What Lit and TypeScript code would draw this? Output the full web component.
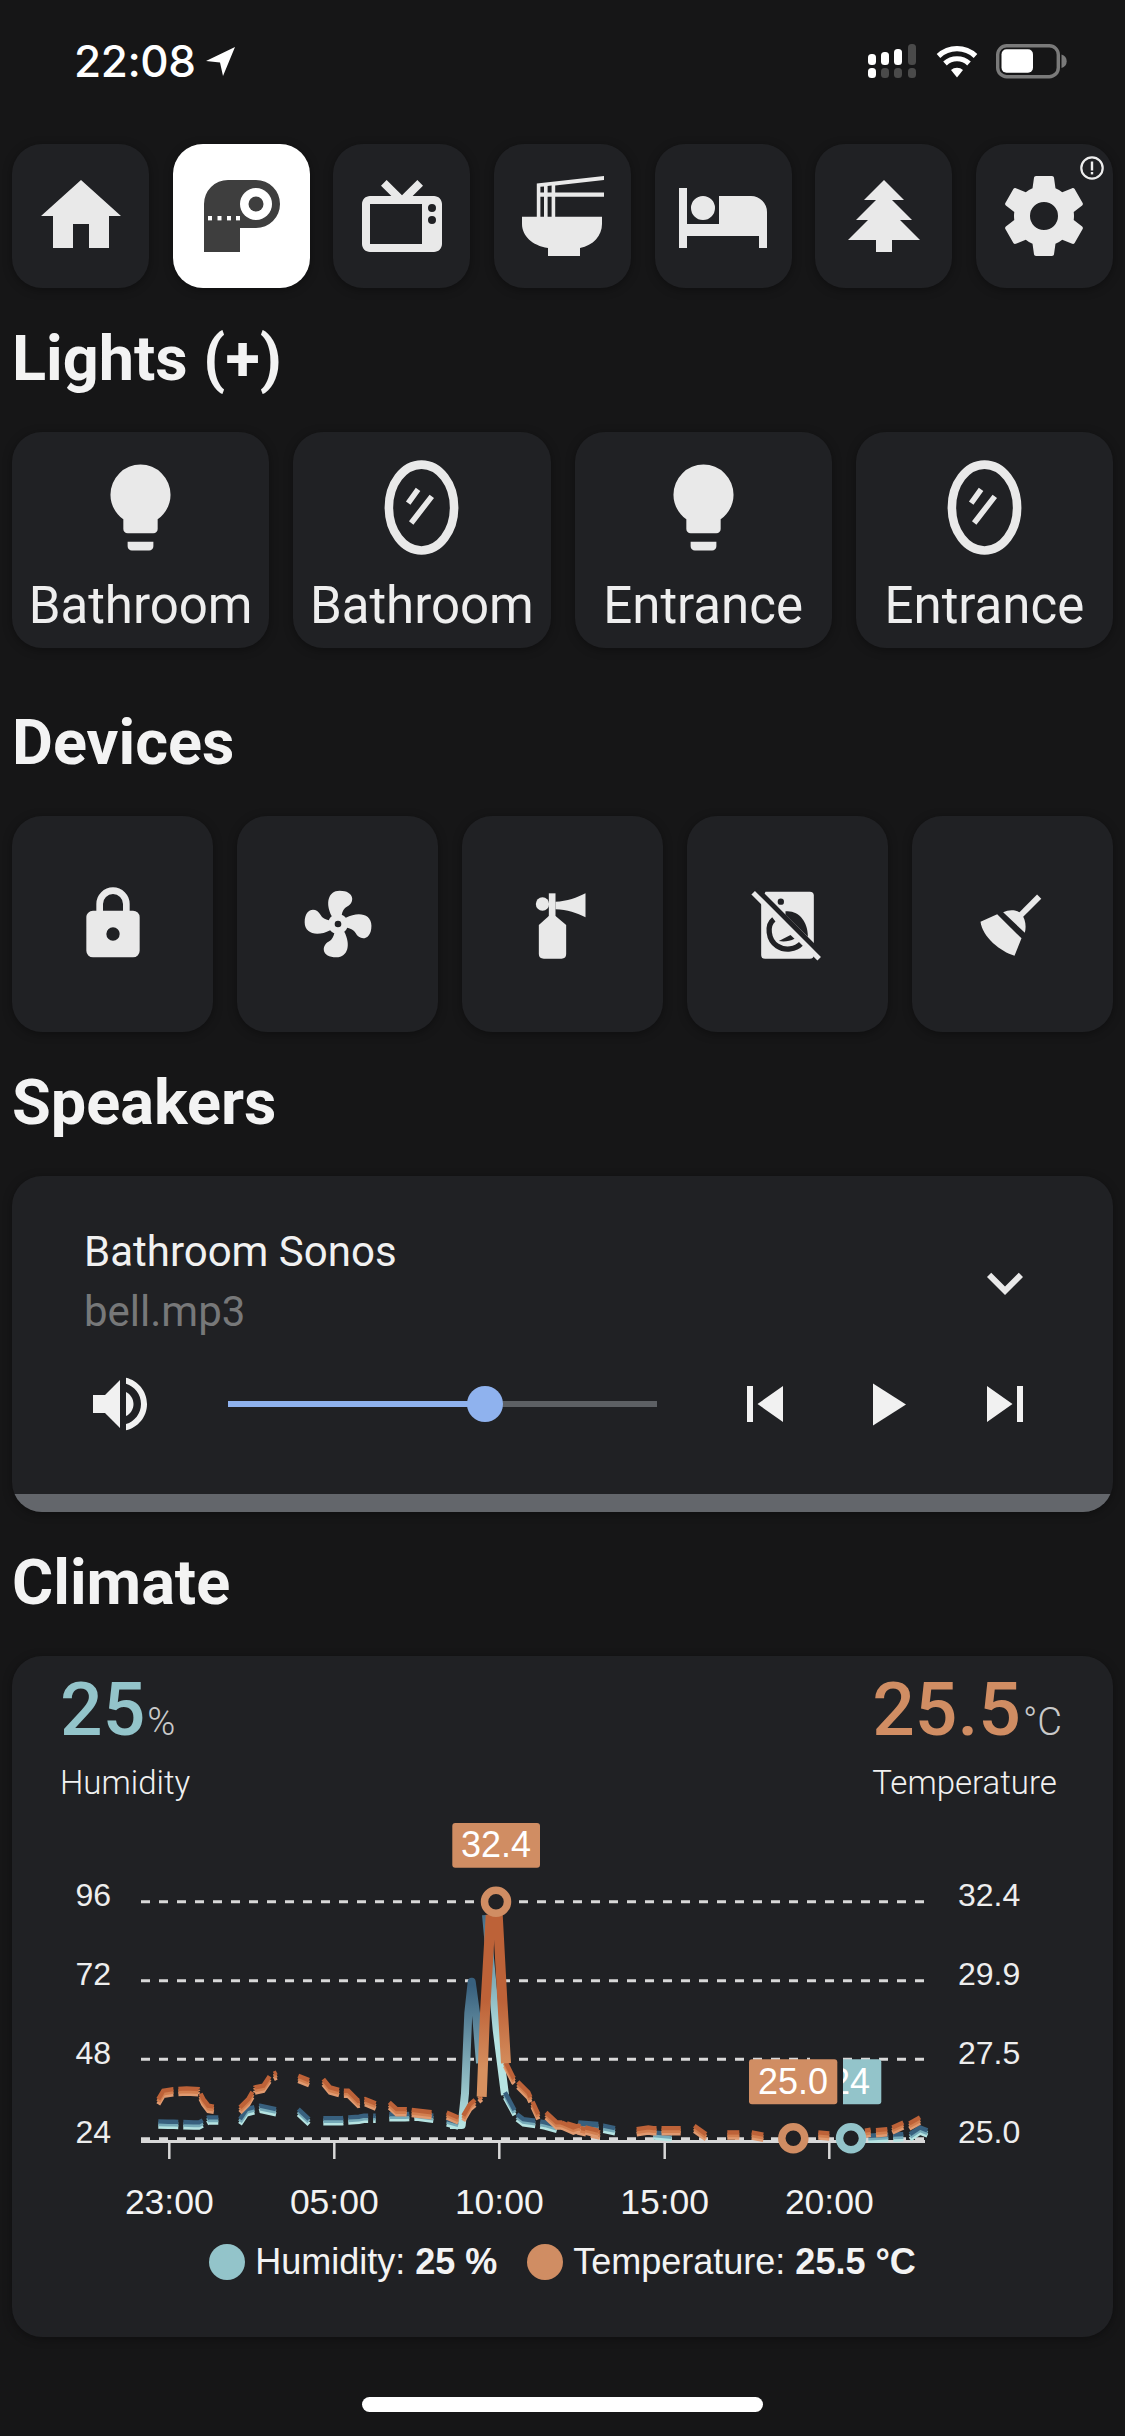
import { LitElement, html, css, svg } from "lit";
import { customElement } from "lit/decorators.js";

const P: Record<string, string> = {
  home: "M10,20V14H14V20H19V12H22L12,3L2,12H5V20H10Z",
  tv: "M8.16,3L6.75,4.41L9.34,7H4C2.89,7 2,7.89 2,9V19C2,20.11 2.89,21 4,21H20C21.11,21 22,20.11 22,19V9C22,7.89 21.11,7 20,7H14.66L17.25,4.41L15.84,3L12,6.84L8.16,3M4,9H17V19H4V9M19.5,9A1,1 0 0,1 20.5,10A1,1 0 0,1 19.5,11A1,1 0 0,1 18.5,10A1,1 0 0,1 19.5,9M19.5,12A1,1 0 0,1 20.5,13A1,1 0 0,1 19.5,14A1,1 0 0,1 18.5,13A1,1 0 0,1 19.5,12Z",
  bed: "M19,7H11V14H3V5H1V20H3V17H21V20H23V11A4,4 0 0,0 19,7M7,13A3,3 0 0,0 10,10A3,3 0 0,0 7,7A3,3 0 0,0 4,10A3,3 0 0,0 7,13Z",
  tree: "M10,21V18H3L8,13H5L10,8H7L12,3L17,8H14L19,13H16L21,18H14V21H10Z",
  cog: "M12,15.5A3.5,3.5 0 0,1 8.5,12A3.5,3.5 0 0,1 12,8.5A3.5,3.5 0 0,1 15.5,12A3.5,3.5 0 0,1 12,15.5M19.43,12.97C19.47,12.65 19.5,12.33 19.5,12C19.5,11.67 19.47,11.34 19.43,11L21.54,9.37C21.73,9.22 21.78,8.95 21.66,8.73L19.66,5.27C19.54,5.05 19.27,4.96 19.05,5.05L16.56,6.05C16.04,5.66 15.5,5.32 14.87,5.07L14.5,2.42C14.46,2.18 14.25,2 14,2H10C9.75,2 9.54,2.18 9.5,2.42L9.13,5.07C8.5,5.32 7.96,5.66 7.44,6.05L4.95,5.05C4.73,4.96 4.46,5.05 4.34,5.27L2.34,8.73C2.21,8.95 2.27,9.22 2.46,9.37L4.57,11C4.53,11.34 4.5,11.67 4.5,12C4.5,12.33 4.53,12.65 4.57,12.97L2.46,14.63C2.27,14.78 2.21,15.05 2.34,15.27L4.34,18.73C4.46,18.95 4.73,19.03 4.95,18.95L7.44,17.94C7.96,18.34 8.5,18.68 9.13,18.93L9.5,21.58C9.54,21.82 9.75,22 10,22H14C14.25,22 14.46,21.82 14.5,21.58L14.87,18.93C15.5,18.67 16.04,18.34 16.56,17.94L19.05,18.95C19.27,19.03 19.54,18.95 19.66,18.73L21.66,15.27C21.78,15.05 21.73,14.78 21.54,14.63L19.43,12.97Z",
  bulb: "M12,2A7,7 0 0,0 5,9C5,11.38 6.19,13.47 8,14.74V17A1,1 0 0,0 9,18H15A1,1 0 0,0 16,17V14.74C17.81,13.47 19,11.38 19,9A7,7 0 0,0 12,2M9,21A1,1 0 0,0 10,22H14A1,1 0 0,0 15,21V20H9V21Z",
  lock: "M12,17A2,2 0 0,0 14,15C14,13.89 13.1,13 12,13A2,2 0 0,0 10,15A2,2 0 0,0 12,17M18,8A2,2 0 0,1 20,10V20A2,2 0 0,1 18,22H6A2,2 0 0,1 4,20V10C4,8.89 4.9,8 6,8H7V6A5,5 0 0,1 12,1A5,5 0 0,1 17,6V8H18M12,3A3,3 0 0,0 9,6V8H15V6A3,3 0 0,0 12,3Z",
  fan: "M12,11A1,1 0 0,0 11,12A1,1 0 0,0 12,13A1,1 0 0,0 13,12A1,1 0 0,0 12,11M12.5,2C17,2 17.11,5.57 14.75,6.75C13.76,7.24 13.32,8.29 13.13,9.22C13.61,9.42 14.03,9.73 14.35,10.13C18.05,8.13 22.03,8.92 22.03,12.5C22.03,17 18.46,17.1 17.28,14.73C16.78,13.74 15.72,13.3 14.79,13.11C14.59,13.59 14.28,14 13.88,14.34C15.87,18.03 15.08,22 11.5,22C7,22 6.91,18.42 9.27,17.24C10.25,16.75 10.69,15.71 10.89,14.79C10.4,14.59 9.97,14.27 9.65,13.87C5.96,15.85 2,15.07 2,11.5C2,7 5.56,6.89 6.74,9.26C7.24,10.25 8.29,10.68 9.22,10.87C9.41,10.39 9.73,9.97 10.14,9.65C8.15,5.96 8.94,2 12.5,2Z",
  vol: "M14,3.23V5.29C16.89,6.15 19,8.83 19,12C19,15.17 16.89,17.84 14,18.7V20.77C18,19.86 21,16.28 21,12C21,7.72 18,4.14 14,3.23M16.5,12C16.5,10.23 15.5,8.71 14,7.97V16.03C15.5,15.29 16.5,13.77 16.5,12M3,9V15H7L12,20V4L7,9H3Z",
  prev: "M6,18V6H8V18H6M9.5,12L18,6V18L9.5,12Z",
  play: "M8,5.14V19.14L19,12.14L8,5.14Z",
  next: "M16,18H18V6H16M6,18L14.5,12L6,6V18Z",
  chev: "M7.41,8.58L12,13.17L16.59,8.58L18,10L12,16L6,10L7.41,8.58Z",
};

const mdi = (name: string, cls: string) =>
  html`<svg class=${cls} viewBox="0 0 24 24"><path d=${P[name]} fill-rule="evenodd"></path></svg>`;

const roll = html`<svg class="i96" viewBox="0 0 96 96">
  <path d="M11 84V36A24 24 0 0 1 35 12H63A24 24 0 0 1 63 60H47V84Z"></path>
  <circle cx="63" cy="36" r="16" fill="#fff"></circle>
  <circle cx="63" cy="36" r="7.5"></circle>
  <g fill="#fff"><rect x="15" y="48" width="4" height="4.4"></rect><rect x="24.5" y="48" width="4" height="4.4"></rect><rect x="34" y="48" width="4" height="4.4"></rect><rect x="43" y="48" width="4" height="4.4"></rect></g>
</svg>`;

const noodles = html`<svg class="i96" viewBox="0 0 24 24">
  <path d="M2 12.2H22V14C22 16.9 19.8 19.4 16.5 20V22H8.5V20C4.5 19.4 2 16.9 2 14Z"></path>
  <path d="M5.7 3.9L22.5 2V3L10.3 4.4V6.1H22.5V7.2H10.3V12.4H9.4V7.2H8.4V12.4H7.5V7.2H6.6V12.4H5.7ZM6.6 4.7V6.1H7.5V4.6ZM8.4 4.5V6.1H9.4V4.4Z" fill-rule="evenodd"></path>
</svg>`;

const mirror = html`<svg class="i103" viewBox="0 0 24 24">
  <g fill="none" stroke="#e9e9e9">
    <ellipse cx="12" cy="12" rx="7.6" ry="10" stroke-width="2"></ellipse>
    <path d="M8.9 11L11.2 7.8M9.6 15.6L14.4 9.4" stroke-width="1.3"></path>
  </g>
</svg>`;

const horn = html`<svg class="i80" viewBox="727.5 12 240 240">
  <circle cx="786" cy="72" r="20"></circle>
  <rect x="805" y="40" width="20" height="72"></rect>
  <path d="M825 65C860 65 890 52 915 40V112C890 100 860 88 825 88Z"></path>
  <path d="M805 108H825L857 135V222Q857 236 843 236H790Q775 236 775 222V135Z"></path>
</svg>`;

const wheel = html`<svg class="i80" viewBox="52.5 12 240 240">
  <path d="M105 35H238Q250 35 250 47V224Q250 236 238 236H104Q92 236 92 224V60Z" fill="#e9e9e9"></path>
  <circle cx="151" cy="65" r="9.5" fill="#202124"></circle>
  <path d="M165 94C205 90 232 125 232 170L165 104Z" fill="#202124"></path>
  <path d="M130 118C108 135 112 180 140 198C165 214 195 208 213 190" fill="none" stroke="#202124" stroke-width="16"></path>
  <path d="M145 183L180 165L192 176C178 184 160 186 145 183Z" fill="#202124"></path>
  <path d="M78 28L276 226" stroke="#202124" stroke-width="16" fill="none"></path>
  <path d="M68 38L266 236" stroke="#e9e9e9" stroke-width="15" fill="none"></path>
</svg>`;

const broom = html`<svg class="i80" viewBox="727.5 12 240 240">
  <path d="M868 108L926 50" stroke="#e9e9e9" stroke-width="18" fill="none"></path>
  <path d="M818 97C835 88 860 88 872 102C885 115 888 140 883 158Z"></path>
  <path d="M750 125L800 103L873 175L852 227C810 215 755 170 750 125Z"></path>
</svg>`;

type Pt = [number, number];
const z5 = (p: number[]): Pt[] => { const o: Pt[] = []; for (let i = 0; i < p.length; i += 2) o.push([100 + p[i] / 3, 1800 + p[i + 1] / 3]); return o; };
const z6 = (p: number[]): Pt[] => { const o: Pt[] = []; for (let i = 0; i < p.length; i += 2) o.push([550 + p[i] / 3, 1800 + p[i + 1] / 3]); return o; };
const d = (pts: Pt[]) => "M" + pts.map((q) => q[0].toFixed(1) + " " + q[1].toFixed(1)).join("L");

const tempLow: Pt[][] = [
  z5([175,905,190,880,220,875,260,873,295,875,310,905,325,925,355,930]),
  z5([420,930,445,905,465,870,490,865,510,835,530,825]),
  z5([595,835,627,848]),
  z5([670,845,690,870,725,880,745,880,775,910,795,905,827,918]),
  z5([868,915,890,935,915,935,1000,945]),
  z5([1040,945,1075,960]),
  z5([1090,955,1110,920,1145,890]),
  z5([1215,790,1240,840,1285,885,1315,950]),
  z5([1338,945,1370,975,1390,975,1425,985,1435,990,1500,1005]),
  z6([35,975,70,990,85,985,145,1000]),
  z6([260,995,295,990,310,992,392,992]),
  z6([433,985,468,1010]),
  z6([532,1005,568,1005]),
  z6([605,1005,640,1012]),
  z6([805,1005,838,1008]),
  z6([945,1000,962,997]),
  z6([978,998,1012,995]),
  z6([1027,990,1060,975]),
  z6([1078,978,1110,960]),
];
const humLow: Pt[][] = [
  z5([175,972,205,973,222,973,282,975,297,975,325,960,355,960]),
  z5([420,965,440,935,480,925,528,935]),
  z5([595,935,627,965]),
  z5([670,962,727,962,742,960,777,958,792,955,827,955]),
  z5([868,950,900,950,915,950,950,948,965,950,1000,955]),
  z5([1040,965,1075,975]),
  z5([1215,885,1250,950,1270,965,1320,972,1335,975,1370,985]),
  z5([1435,975,1500,980]),
  z6([85,978,145,985,160,985,195,992]),
  z6([310,1005,365,1010]),
  z6([955,1015,1060,1010]),
  z6([1080,1010,1110,990,1135,1000]),
];
const humPeak = z5([1050,975,1085,975,1095,880,1105,640,1115,545,1128,640,1140,790]);
const humPeak2 = z5([1158,345,1190,690,1215,885]);
const tempPeakL = z5([1145,890,1155,640,1172,345]);
const tempPeakR = z5([1193,345,1207,600,1218,790]);

const band = (pts: Pt[], c: string[]) => svg`
  <g fill="none" stroke-width="4.4" stroke-dasharray="20 5">
    <path d=${d(pts)} stroke=${c[2]} transform="translate(0 2.6)"></path>
    <path d=${d(pts)} stroke=${c[1]}></path>
    <path d=${d(pts)} stroke=${c[0]} transform="translate(0 -2.6)"></path>
  </g>`;

const TEMP = ["#bd6238", "#d27f50", "#e09a70"];
const HUM = ["#38607e", "#76aab8", "#b6e4e2"];

const ticks = [[169.3, "23:00"], [334.3, "05:00"], [499.3, "10:00"], [664.7, "15:00"], [829.3, "20:00"]] as [number, string][];
const grid = [1901.7, 1980.7, 2059.3, 2138.7];
const left = [[1906, "96"], [1985, "72"], [2064, "48"], [2143, "24"]] as [number, string][];
const right = [[1906, "32.4"], [1985, "29.9"], [2064, "27.5"], [2143, "25.0"]] as [number, string][];

const chart = html`<svg class="chart" viewBox="12 1810 1101 420">
  <defs>
    <linearGradient id="tp" gradientUnits="userSpaceOnUse" x1="0" y1="1900" x2="0" y2="2100"><stop offset="0.5" stop-color="#bd6238"></stop><stop offset="0.85" stop-color="#d6905f"></stop></linearGradient>
    <linearGradient id="hp" gradientUnits="userSpaceOnUse" x1="0" y1="1985" x2="0" y2="2125"><stop offset="0" stop-color="#38607e"></stop><stop offset="1" stop-color="#b6e4e2"></stop></linearGradient>
    <linearGradient id="hq" gradientUnits="userSpaceOnUse" x1="0" y1="1900" x2="0" y2="2100"><stop offset="0" stop-color="#38607e"></stop><stop offset="0.7" stop-color="#b6e4e2"></stop></linearGradient>
  </defs>
  ${grid.map((y) => svg`<path d="M141 ${y}H925" stroke="#d8d8d8" stroke-width="3" stroke-dasharray="9 9"></path>`)}
  <path d="M141 2141.5H925" stroke="#d8d8d8" stroke-width="3"></path>
  ${ticks.map((t) => svg`<path d="M${t[0]} 2142V2159" stroke="#d8d8d8" stroke-width="2.5"></path>`)}
  <g class="ct">
    ${left.map((t) => svg`<text x="111" y=${t[0]} text-anchor="end">${t[1]}</text>`)}
    ${right.map((t) => svg`<text x="958" y=${t[0]}>${t[1]}</text>`)}
  </g>
  <g class="cx">${ticks.map((t) => svg`<text x=${t[0]} y="2214" text-anchor="middle">${t[1]}</text>`)}</g>
  <path d=${d(humPeak)} fill="none" stroke="url(#hp)" stroke-width="8" stroke-linejoin="round"></path>
  <path d=${d(humPeak2)} fill="none" stroke="url(#hq)" stroke-width="8" stroke-linejoin="round"></path>
  ${humLow.map((p) => band(p, HUM))}
  ${tempLow.map((p) => band(p, TEMP))}
  <path d=${d(tempPeakL)} fill="none" stroke="url(#tp)" stroke-width="10" stroke-linejoin="round"></path>
  <path d=${d(tempPeakR)} fill="none" stroke="url(#tp)" stroke-width="10" stroke-linejoin="round"></path>
  <circle cx="496" cy="1901.7" r="11.5" fill="#202124" stroke="#d08d63" stroke-width="7.5"></circle>
  <rect x="452.3" y="1823" width="87.7" height="44.7" rx="3" fill="#d08d63"></rect>
  <text class="lb" x="496" y="1857" text-anchor="middle">32.4</text>
  <circle cx="793.3" cy="2138.3" r="11.5" fill="#202124" stroke="#d08d63" stroke-width="7.5"></circle>
  <circle cx="851" cy="2138.3" r="11.5" fill="#202124" stroke="#93c4ca" stroke-width="7.5"></circle>
  <rect x="813" y="2059.3" width="68.3" height="45" rx="3" fill="#93c4ca"></rect>
  <text class="lb" x="850" y="2094" text-anchor="middle">24</text>
  <rect x="810" y="2057" width="33" height="50" fill="#202124"></rect>
  <rect x="749" y="2059.3" width="88.3" height="45" rx="3" fill="#d08d63"></rect>
  <text class="lb" x="793" y="2094" text-anchor="middle">25.0</text>
</svg>`;

const statusIcons = html`<svg class="status-icons" viewBox="860 40 210 42">
  <g fill="#fff">
    <rect x="868" y="54" width="8" height="11" rx="3.5"></rect>
    <rect x="881" y="52" width="8" height="13" rx="3.5"></rect>
    <rect x="894" y="49" width="8" height="16" rx="3.5"></rect>
    <rect x="868" y="68" width="8" height="10" rx="3.5"></rect>
  </g>
  <g fill="#4a4a4a">
    <rect x="908" y="44" width="8" height="21" rx="3.5"></rect>
    <rect x="881" y="68" width="8" height="10" rx="3.5"></rect>
    <rect x="894" y="68" width="8" height="10" rx="3.5"></rect>
    <rect x="908" y="68" width="8" height="10" rx="3.5"></rect>
  </g>
  <g fill="none" stroke="#fff" stroke-width="5.2">
    <path d="M938.5 56A27 27 0 0 1 975.5 56"></path>
    <path d="M945 63.5A17.5 17.5 0 0 1 969 63.5"></path>
  </g>
  <path d="M951 70A9 9 0 0 1 963 70L957 77.5Z" fill="#fff"></path>
  <rect x="997.7" y="45.7" width="60.6" height="31" rx="9" fill="none" stroke="#7a7a7a" stroke-width="3.4"></rect>
  <rect x="1001.5" y="49.3" width="31.5" height="23.4" rx="5" fill="#fff"></rect>
  <path d="M1061.5 54.5A7 7 0 0 1 1061.5 68Z" fill="#7a7a7a"></path>
</svg>`;

@customElement("app-root")
export class AppRoot extends LitElement {
  static styles = css`
    :host { display: block; width: 1125px; height: 2436px; overflow: hidden; background: #161617; color: #f1f1f1; font-family: Roboto, "Liberation Sans", sans-serif; }
    svg { display: block; fill: currentColor; }
    .i96 { width: 96px; height: 96px; }
    .i103 { width: 103px; height: 103px; flex: none; }
    .i80 { width: 80px; height: 80px; }
    .i72 { width: 72px; height: 72px; flex: none; }
    .status { height: 144px; box-sizing: border-box; padding: 40px 55px 0 74px; display: flex; justify-content: space-between; align-items: flex-start; }
    .time { display: flex; align-items: center; gap: 10px; height: 42px; font: 500 44px/42px Inter, "Liberation Sans", sans-serif; color: #fff; letter-spacing: -0.4px; }
    .arrow { width: 30px; height: 30px; }
    .status-icons { width: 210px; height: 42px; }
    .card { background: #202124; border-radius: 30px; box-shadow: 0 2px 10px rgba(0, 0, 0, 0.35); color: #e9e9e9; }
    .tabs { display: flex; justify-content: space-between; padding: 0 12px; }
    .tab { width: 137px; height: 144px; display: flex; align-items: center; justify-content: center; position: relative; }
    .tab.active { background: #fff; color: #3e3e3e; }
    .badge { position: absolute; left: 103px; top: 11px; width: 26px; height: 26px; }
    h2 { margin: 0; height: 144px; padding: 34px 12px 0; box-sizing: border-box; font-size: 63px; line-height: 74px; font-weight: 700; color: #f3f3f3; }
    .mt { margin-top: 24px; }
    .lights { display: grid; grid-template-columns: repeat(4, 1fr); gap: 24px; padding: 0 12px; }
    .light { height: 216px; display: flex; flex-direction: column; align-items: center; box-sizing: border-box; padding-top: 23.5px; }
    .light span { font-size: 51px; line-height: 60px; margin-top: 17px; color: #eee; }
    .devices { display: grid; grid-template-columns: repeat(5, 1fr); gap: 24px; padding: 0 12px; }
    .device { height: 216px; display: flex; align-items: center; justify-content: center; }
    .player { margin: 0 12px; height: 336px; overflow: hidden; display: flex; flex-direction: column; }
    .p-top { display: flex; justify-content: space-between; align-items: center; padding: 45px 72px 0; }
    .p-top > svg { margin-top: 3px; }
    .p-name { font-size: 42px; line-height: 61px; color: #f1f1f1; }
    .p-file { font-size: 42px; line-height: 60px; color: #777879; }
    .p-ctl { display: flex; align-items: center; padding: 26px 72px 0; }
    .slider { flex: 1; margin: 0 72px; height: 6px; background: #5d6064; display: flex; align-items: center; }
    .slider i { display: block; width: 257px; height: 6px; background: #8fb2ee; flex: none; }
    .slider b { display: block; width: 36px; height: 36px; margin-left: -18px; border-radius: 50%; background: #8fb2ee; flex: none; }
    .ctl-gap { margin-left: 48px; }
    .p-ctl svg { color: #f1f1f1; }
    .p-bar { margin-top: auto; height: 18px; background: #63666b; }
    .climate { margin: 0 12px; height: 681px; display: flex; flex-direction: column; }
    .stats { display: flex; justify-content: space-between; padding: 17px 51px 0 48px; }
    .num { font-size: 75px; line-height: 72px; font-weight: 500; }
    .num small { font-size: 38px; color: #c9c9c9; font-weight: 300; margin-left: 2px; }
    .lab { font-size: 33px; line-height: 40px; margin-top: 4.5px; font-weight: 300; color: #f1f1f1; }
    .hum { color: #93c4ca; }
    .tmp { color: #d08d63; }
    .chart { width: 1101px; height: 420px; margin-top: 7px; flex: none; }
    .ct text { font: 32px "Liberation Sans", sans-serif; fill: #eee; }
    .cx text { font: 35.5px "Liberation Sans", sans-serif; fill: #f3f3f3; }
    .lb { font: 36px "Liberation Sans", sans-serif; fill: #fff; }
    .legend { display: flex; justify-content: center; align-items: center; gap: 30px; height: 50px; margin-top: 7.5px; font: 36px/50px "Liberation Sans", sans-serif; color: #f3f3f3; }
    .legend span { display: flex; align-items: center; }
    .legend u { display: block; width: 36px; height: 36px; border-radius: 50%; margin-right: 10px; }
    .legend u.hum { background: #93c4ca; }
    .legend u.tmp { background: #d08d63; }
    .legend b { margin-left: 10px; font-weight: 700; }
    .bar { width: 401px; height: 15px; border-radius: 8px; background: #fff; margin: 60px auto 0; }
  `;

  render() {
    return html`
      <div class="status">
        <div class="time">22:08
          <svg class="arrow" viewBox="0 0 30 30"><path d="M29 1L0 15L14 16.5L17 30Z" fill="#fff"></path></svg>
        </div>
        ${statusIcons}
      </div>
      <div class="tabs">
        <div class="card tab">${mdi("home", "i96")}</div>
        <div class="card tab active">${roll}</div>
        <div class="card tab">${mdi("tv", "i96")}</div>
        <div class="card tab">${noodles}</div>
        <div class="card tab">${mdi("bed", "i96")}</div>
        <div class="card tab">${mdi("tree", "i96")}</div>
        <div class="card tab">${mdi("cog", "i96")}
          <svg class="badge" viewBox="0 0 26 26"><circle cx="13" cy="13" r="10.7" fill="none" stroke="#eee" stroke-width="2.2"></circle><rect x="11.8" y="6.5" width="2.4" height="9" fill="#eee"></rect><rect x="11.8" y="17" width="2.4" height="2.4" fill="#eee"></rect></svg>
        </div>
      </div>
      <h2>Lights (+)</h2>
      <div class="lights">
        <div class="card light">${mdi("bulb", "i103")}<span>Bathroom</span></div>
        <div class="card light">${mirror}<span>Bathroom</span></div>
        <div class="card light">${mdi("bulb", "i103")}<span>Entrance</span></div>
        <div class="card light">${mirror}<span>Entrance</span></div>
      </div>
      <h2 class="mt">Devices</h2>
      <div class="devices">
        <div class="card device">${mdi("lock", "i80")}</div>
        <div class="card device">${mdi("fan", "i80")}</div>
        <div class="card device">${horn}</div>
        <div class="card device">${wheel}</div>
        <div class="card device">${broom}</div>
      </div>
      <h2>Speakers</h2>
      <div class="card player">
        <div class="p-top">
          <div><div class="p-name">Bathroom Sonos</div><div class="p-file">bell.mp3</div></div>
          ${mdi("chev", "i72")}
        </div>
        <div class="p-ctl">
          ${mdi("vol", "i72")}
          <div class="slider"><i></i><b></b></div>
          ${mdi("prev", "i72")}
          <span class="ctl-gap">${mdi("play", "i72")}</span>
          <span class="ctl-gap">${mdi("next", "i72")}</span>
        </div>
        <div class="p-bar"></div>
      </div>
      <h2>Climate</h2>
      <div class="card climate">
        <div class="stats">
          <div><div class="num hum">25<small>%</small></div><div class="lab">Humidity</div></div>
          <div><div class="num tmp">25.5<small>°C</small></div><div class="lab">Temperature</div></div>
        </div>
        ${chart}
        <div class="legend">
          <span><u class="hum"></u>Humidity:<b>25 %</b></span>
          <span><u class="tmp"></u>Temperature:<b>25.5 °C</b></span>
        </div>
      </div>
      <div class="bar"></div>
    `;
  }
}
